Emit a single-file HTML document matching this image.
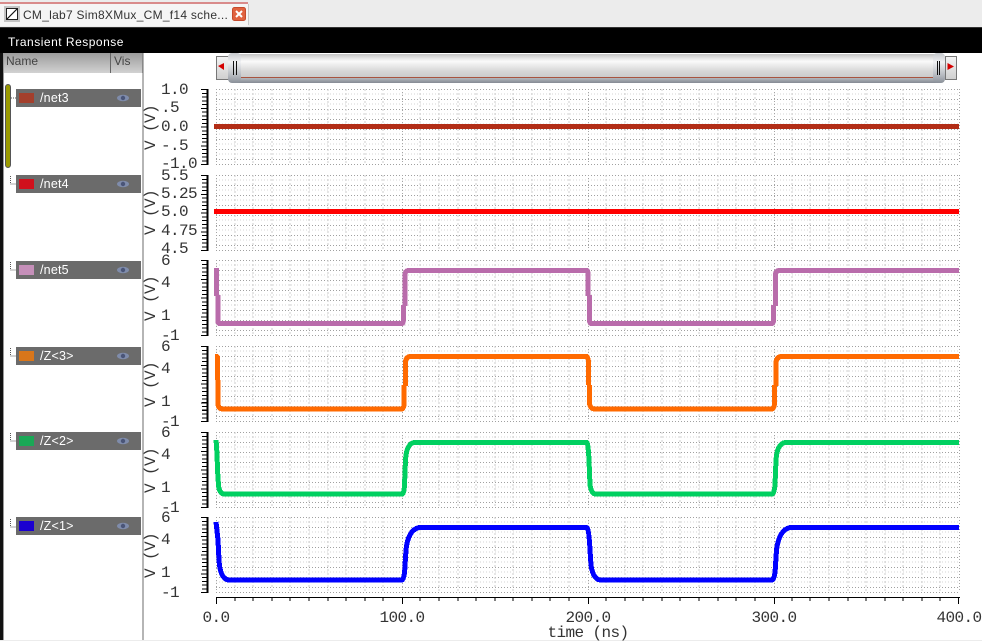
<!DOCTYPE html>
<html><head><meta charset="utf-8"><title>Transient Response</title>
<style>
html,body{margin:0;padding:0;background:#fff}
body{width:982px;height:641px;overflow:hidden;position:relative;font-family:"Liberation Sans",sans-serif}
svg{position:absolute;left:0;top:0;display:block}
.s{font:12px "Liberation Sans",sans-serif}
.r{font:12.5px "Liberation Sans",sans-serif;letter-spacing:.2px}
.m{font:16px "Liberation Mono",monospace;fill:#333;letter-spacing:-.6px}
</style></head><body>
<svg width="982" height="641" viewBox="0 0 982 641">
<defs>
<linearGradient id="h" x1="0" y1="0" x2="0" y2="1"><stop offset="0" stop-color="#9c9c9c"/><stop offset="1" stop-color="#d2d2d2"/></linearGradient>
<linearGradient id="t" x1="0" y1="0" x2="0" y2="1"><stop offset="0" stop-color="#c4c4c4"/><stop offset=".3" stop-color="#fafafa"/><stop offset=".7" stop-color="#d8d8d8"/><stop offset="1" stop-color="#c8c8c8"/></linearGradient>
<linearGradient id="u" x1="0" y1="0" x2="0" y2="1"><stop offset="0" stop-color="#b4b8bd"/><stop offset="1" stop-color="#858b94"/></linearGradient>
<linearGradient id="c" x1="0" y1="0" x2="0" y2="1"><stop offset="0" stop-color="#c5c8cc"/><stop offset=".3" stop-color="#f0f1f3"/><stop offset=".75" stop-color="#b5b9bf"/><stop offset="1" stop-color="#8a9099"/></linearGradient>
<linearGradient id="b" x1="0" y1="0" x2="0" y2="1"><stop offset="0" stop-color="#f4f4f4"/><stop offset="1" stop-color="#cfcfcf"/></linearGradient>
<g id="grid" shape-rendering="crispEdges" fill="none">
<path d="M216 5H959M216 15H959M216 25H959M216 35H959M216 45H959M216 55H959M216 65H959" stroke="#d4d4d4" stroke-dasharray="1 2"/>
<path d="M216 .5H959M216 10.5H959M216 20.5H959M216 30.5H959M216 40.5H959M216 50.5H959M216 60.5H959M216 70.5H959M216 75.5H959" stroke="#a0a0a0" stroke-dasharray="1 2"/>
<path d="M235 0V75M253 0V75M272 0V75M290 0V75M309 0V75M328 0V75M346 0V75M365 0V75M383 0V75M420 0V75M439 0V75M458 0V75M476 0V75M495 0V75M513 0V75M532 0V75M550 0V75M569 0V75M606 0V75M625 0V75M643 0V75M662 0V75M680 0V75M699 0V75M718 0V75M736 0V75M755 0V75M792 0V75M810 0V75M829 0V75M848 0V75M866 0V75M885 0V75M903 0V75M922 0V75M940 0V75" stroke="#cdcdcd" stroke-dasharray="2 2"/>
<path d="M216.5 0V75M402.5 0V75M588.5 0V75M774.5 0V75M959.5 0V75" stroke="#a5a5a5" stroke-dasharray="1 2"/>
<path d="M207.5 0V76" stroke="#000" stroke-width="1.6"/>
<path d="M204.5 0V76" stroke="#000" stroke-width="5" stroke-dasharray="1 2.75"/>
<path d="M201 .5H207M201 19.25H207M201 38H207M201 56.75H207M201 75.5H207" stroke="#000"/>
</g>
</defs>

<!-- top tab strip -->
<rect x="0" y="0" width="982" height="27" fill="#ececec"/>
<rect x="0" y="3" width="248" height="23" fill="#f5f5f5"/>
<rect x="0" y="2" width="248" height="2" fill="#d98b8b"/>
<rect x="248" y="4" width="1" height="21" fill="#c8c8c8"/>
<rect x="4" y="6" width="16" height="16" fill="#c4c4c4"/>
<rect x="6.5" y="8.5" width="11" height="11" fill="#fff" stroke="#222"/>
<path d="M7 19L17 9" stroke="#111" stroke-width="1.2"/>
<text class="s" x="23" y="19" fill="#333" style="letter-spacing:.27px">CM_lab7 Sim8XMux_CM_f14 sche...</text>
<rect x="232.5" y="7.5" width="13" height="13" rx="2" fill="#e0623f" stroke="#c54a2c"/>
<path d="M236 11L242 17M242 11L236 17" stroke="#fff" stroke-width="2"/>

<!-- black title -->
<rect x="0" y="27" width="982" height="26" fill="#000"/>
<rect x="0" y="27" width="982" height="1" fill="#333"/>
<text class="s" x="8" y="46" fill="#fff" style="letter-spacing:.5px">Transient Response</text>

<!-- left frame -->
<rect x="0" y="53" width="3" height="588" fill="#111"/>
<rect x="3" y="53" width="1" height="588" fill="#999"/>
<rect x="142" y="53" width="2" height="588" fill="#b5b5b5"/>
<rect x="4" y="53" width="138" height="20" fill="url(#h)"/>
<rect x="110" y="53" width="1" height="20" fill="#666"/>
<rect x="142" y="53" width="1" height="20" fill="#888"/>
<text class="s" x="6" y="65" fill="#444">Name</text>
<text class="s" x="114" y="65" fill="#444">Vis</text>
<rect x="5.5" y="84.5" width="5" height="83" rx="2.5" fill="#9a9a00" stroke="#555"/>
<rect x="0" y="640" width="982" height="1" fill="#ececec"/>

<!-- tree connectors -->
<path d="M11 98H16M10.500 176V184H16M10.500 262V270H16M10.500 348V356H16M10.500 433V441H16M10.500 519V527H16" stroke="#555" fill="none" stroke-dasharray="1 1" shape-rendering="crispEdges"/>

<!-- rows -->
<g shape-rendering="crispEdges">
<rect x="16" y="89" width="125" height="18" fill="#6b6b6b"/><rect x="19" y="93" width="15" height="10" fill="#a33f2c"/>
<rect x="16" y="175" width="125" height="18" fill="#6b6b6b"/><rect x="19" y="179" width="15" height="10" fill="#d0101c"/>
<rect x="16" y="261" width="125" height="18" fill="#6b6b6b"/><rect x="19" y="265" width="15" height="10" fill="#c58fb9"/>
<rect x="16" y="347" width="125" height="18" fill="#6b6b6b"/><rect x="19" y="351" width="15" height="10" fill="#d9761a"/>
<rect x="16" y="432" width="125" height="18" fill="#6b6b6b"/><rect x="19" y="436" width="15" height="10" fill="#1aa856"/>
<rect x="16" y="517" width="125" height="18" fill="#6b6b6b"/><rect x="19" y="521" width="15" height="10" fill="#1a00d0"/>
</g>
<g class="r" fill="#fff">
<text x="40" y="102">/net3</text>
<text x="40" y="188">/net4</text>
<text x="40" y="274">/net5</text>
<text x="40" y="360">/Z&lt;3&gt;</text>
<text x="40" y="445">/Z&lt;2&gt;</text>
<text x="40" y="530">/Z&lt;1&gt;</text>
</g>
<g>
<g fill="#7f8cab"><ellipse cx="123" cy="98" rx="6" ry="3.200"/><ellipse cx="123" cy="184" rx="6" ry="3.200"/><ellipse cx="123" cy="270" rx="6" ry="3.200"/><ellipse cx="123" cy="356" rx="6" ry="3.200"/><ellipse cx="123" cy="441" rx="6" ry="3.200"/><ellipse cx="123" cy="526" rx="6" ry="3.200"/></g>
<g fill="#4a5578"><circle cx="123" cy="98" r="2.200"/><circle cx="123" cy="184" r="2.200"/><circle cx="123" cy="270" r="2.200"/><circle cx="123" cy="356" r="2.200"/><circle cx="123" cy="441" r="2.200"/><circle cx="123" cy="526" r="2.200"/></g>
</g>

<!-- horizontal scroller -->
<rect x="216.500" y="56.500" width="12" height="23" fill="url(#b)" stroke="#777"/>
<path d="M218 66L224 63V70Z" fill="#d40000"/>
<rect x="945.500" y="56.500" width="11" height="23" fill="url(#b)" stroke="#777"/>
<path d="M954 66.500L947.500 63V70Z" fill="#d40000"/>
<rect x="232" y="54" width="708" height="24" fill="url(#t)"/>
<rect x="232" y="78" width="708" height="5" fill="url(#u)"/>
<rect x="240" y="77" width="693" height="1" fill="#a8543f"/>
<rect x="228" y="53" width="13" height="30" rx="4" fill="url(#c)"/>
<rect x="933" y="53" width="12" height="30" rx="4" fill="url(#c)"/>
<path d="M233.500 61V75M236.500 61V75M937.500 61V75M939.500 61V75" stroke="#111" stroke-width="1"/>

<!-- grids -->
<use href="#grid" y="89"/><use href="#grid" y="175"/><use href="#grid" y="260"/><use href="#grid" y="346"/><use href="#grid" y="432"/><use href="#grid" y="517"/>

<!-- y labels -->
<g class="m">
<text x="161" y="94">1.0</text><text x="161" y="112">.5</text><text x="161" y="131">0.0</text><text x="161" y="150">-.5</text><text x="161" y="168">-1.0</text>
<text x="161" y="180">5.5</text><text x="161" y="198">5.25</text><text x="161" y="216">5.0</text><text x="161" y="235">4.75</text><text x="161" y="253">4.5</text>
<text x="161" y="265">6</text><text x="161" y="287">4</text><text x="161" y="320">1</text><text x="161" y="340">-1</text>
<text x="161" y="351">6</text><text x="161" y="373">4</text><text x="161" y="406">1</text><text x="161" y="426">-1</text>
<text x="161" y="437">6</text><text x="161" y="459">4</text><text x="161" y="492">1</text><text x="161" y="512">-1</text>
<text x="161" y="522">6</text><text x="161" y="544">4</text><text x="161" y="577">1</text><text x="161" y="597">-1</text>
<text transform="translate(155,150) rotate(-90)">V (V)</text>
<text transform="translate(155,235) rotate(-90)">V (V)</text>
<text transform="translate(155,321) rotate(-90)">V (V)</text>
<text transform="translate(155,407) rotate(-90)">V (V)</text>
<text transform="translate(155,493) rotate(-90)">V (V)</text>
<text transform="translate(155,578) rotate(-90)">V (V)</text>
</g>

<!-- traces -->
<g fill="none" stroke-width="5" stroke-linejoin="bevel" shape-rendering="crispEdges">
<path d="M214 126.500H959" stroke="#b22d16"/>
<path d="M214 211.500H959" stroke="#f00"/>
<path d="M216.500 268V296M218 295V323.500H402.500Q403 323 403.500 320V305M405 306V275Q405 271 408 270.500H587Q588 271 588 274V296M589.500 295V320Q589.500 323 591 323.500H772Q773.500 323 773.500 320V305M775.500 306V275Q775.500 271 779 270.500H959" stroke="#b96cab"/>
<path d="M215 356.500H217.500V380M218 380V404Q218 408 222 409H402Q403.500 408.500 404 405V385M405.500 386V362Q406 357 410 356.500H587Q588 357 588.500 362V385M589.500 385V404Q590.500 408.500 594 409H772Q774 408.500 774.500 404V385M776 386V362Q777 357 781 356.500H959" stroke="#ff6a00"/>
<path d="M216 440Q217 450 217.500 470L218.500 485Q219 493 224 494.200H402Q404 494 404.500 485L405.500 460Q406.500 444 414 442.500H587Q588 443 589 460L590 485Q591.500 494 596 494.200H772Q774 494 775 485L776 460Q777 444 785 442.500H959" stroke="#00d060"/>
<path d="M216 522L218 540L219 560Q220 578 228 580H402Q404.500 579 405 565L406 550Q408 530 419 527.500H587Q589 530 590 550L591 565Q593 579 600 580H772Q775 579 775.500 565L776.500 550Q779 530 790 527.500H959" stroke="#00f"/>
</g>

<!-- x axis -->
<g shape-rendering="crispEdges" fill="none" stroke="#000">
<path d="M216 597.500H960"/>
<path d="M235 597V601M253 597V601M272 597V601M290 597V601M309 597V601M328 597V601M346 597V601M365 597V601M383 597V601M420 597V601M439 597V601M458 597V601M476 597V601M495 597V601M513 597V601M532 597V601M550 597V601M569 597V601M606 597V601M625 597V601M643 597V601M662 597V601M680 597V601M699 597V601M718 597V601M736 597V601M755 597V601M792 597V601M810 597V601M829 597V601M848 597V601M866 597V601M885 597V601M903 597V601M922 597V601M940 597V601"/>
<path d="M216.500 597V604M402.500 597V604M588.500 597V604M774.500 597V604M958.500 597V604"/>
</g>
<g class="m" text-anchor="middle">
<text x="216" y="622">0.0</text><text x="402" y="622">100.0</text><text x="588" y="622">200.0</text><text x="774" y="622">300.0</text><text x="959" y="622">400.0</text>
<text x="588" y="637">time (ns)</text>
</g>
</svg>
</body></html>
